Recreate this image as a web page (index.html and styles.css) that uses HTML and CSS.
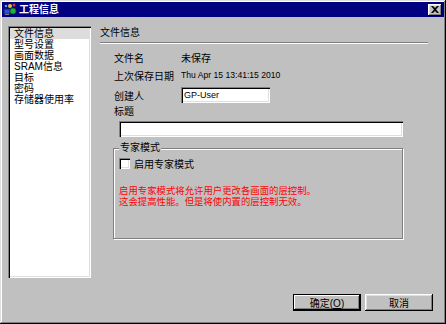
FILE: index.html
```html
<!DOCTYPE html>
<html lang="zh-CN">
<head>
    <meta charset="UTF-8">
    <title>工程信息</title>
    <link rel="stylesheet" href="styles.css">
</head>
<body>
    <div class="window">
        <!-- 标题栏 -->
        <div class="titlebar">
            <svg class="app-icon" width="14" height="13" viewBox="0 0 14 13">
                <rect x="1" y="6" width="6" height="5" fill="#3050c8" stroke="#102080" stroke-width="1"/>
                <rect x="2" y="11" width="4" height="1" fill="#808080"/>
                <circle cx="10" cy="8" r="3" fill="#20b040" stroke="#086020" stroke-width="0.8"/>
                <circle cx="7" cy="3" r="2" fill="#f0c020"/>
                <circle cx="11" cy="2" r="1.5" fill="#e03030"/>
                <circle cx="3" cy="3" r="1.3" fill="#40a0ff"/>
            </svg>
            <span class="title">工程信息</span>
            <button class="close-btn">
                <svg width="8" height="7" viewBox="0 0 8 7">
                    <path d="M0 0 L2 0 L4 2 L6 0 L8 0 L5 3.5 L8 7 L6 7 L4 5 L2 7 L0 7 L3 3.5 Z" fill="#000"/>
                </svg>
            </button>
        </div>

        <div class="main">
            <!-- 左侧列表 -->
            <ul class="nav-list">
                <li class="active">文件信息</li>
                <li>型号设置</li>
                <li>画面数据</li>
                <li>SRAM信息</li>
                <li>目标</li>
                <li>密码</li>
                <li>存储器使用率</li>
            </ul>

            <!-- 右侧内容 -->
            <div class="panel">
                <div class="panel-title">文件信息</div>
                <div class="separator"></div>

                <div class="field first">
                    <span class="label">文件名</span>
                    <span class="value">未保存</span>
                </div>
                <div class="field">
                    <span class="label">上次保存日期</span>
                    <span class="value date">Thu Apr 15 13:41:15 2010</span>
                </div>
                <div class="field author">
                    <span class="label">创建人</span>
                    <div class="text-input short">GP-User</div>
                </div>
                <div class="field-title">标题</div>
                <div class="text-input wide"></div>

                <fieldset class="group">
                    <legend>专家模式</legend>
                    <div class="check-row">
                        <span class="checkbox"></span>
                        <span>启用专家模式</span>
                    </div>
                    <p class="warning">启用专家模式将允许用户更改各画面的层控制。<br>这会提高性能。但是将使内置的层控制无效。</p>
                </fieldset>
            </div>
        </div>

        <!-- 按钮 -->
        <div class="footer">
            <button class="button default">确定(<u>O</u>)</button>
            <button class="button">取消</button>
        </div>
    </div>
</body>
</html>
```

FILE: styles.css
```css
body {
    margin: 0;
    padding: 0;
    font-family: "Liberation Sans", "Noto Sans CJK SC", sans-serif;
    font-size: 10px;
    color: #000;
    background-color: #c0c0c0;
}

.window {
    width: 446px;
    height: 324px;
    box-sizing: border-box;
    padding: 2px;
    background-color: #c0c0c0;
    display: flex;
    flex-direction: column;
    box-shadow: inset -1px -1px #000, inset 1px 1px #dfdfdf,
                inset -2px -2px #808080, inset 2px 2px #fff;
}

.titlebar {
    height: 15px;
    background-color: #000080;
    display: flex;
    align-items: center;
    padding: 0 2px 0 1px;
}

.app-icon {
    display: block;
}

.title {
    margin-left: 2px;
    color: #fff;
    font-weight: bold;
    font-size: 10px;
    line-height: 12px;
}

.close-btn {
    margin-left: auto;
    width: 14px;
    height: 12px;
    padding: 0;
    border: none;
    background-color: #c0c0c0;
    display: flex;
    align-items: center;
    justify-content: center;
    box-shadow: inset -1px -1px #000, inset 1px 1px #fff,
                inset -2px -2px #808080, inset 2px 2px #dfdfdf;
}

.close-btn svg {
    display: block;
}

.main {
    display: flex;
    padding: 9px 0 0 6px;
}

.nav-list {
    width: 83px;
    height: 252px;
    box-sizing: border-box;
    margin: 0;
    padding: 2px;
    list-style: none;
    background-color: #fff;
    box-shadow: inset 1px 1px #808080, inset 2px 2px #000,
                inset -1px -1px #fff, inset -2px -2px #dfdfdf;
}

.nav-list li {
    height: 11px;
    line-height: 11px;
    padding-left: 4px;
    white-space: nowrap;
}

.nav-list li.active {
    background-color: #dcdcdc;
}

.panel {
    margin-left: 9px;
    display: flex;
    flex-direction: column;
    align-items: flex-start;
}

.panel-title {
    margin-top: 1px;
    line-height: 12px;
}

.separator {
    width: 328px;
    margin-top: 3px;
    border-top: 1px solid #808080;
    border-bottom: 1px solid #fff;
}

.field {
    display: flex;
    align-items: center;
    height: 18px;
    margin-left: 14px;
}

.field.first {
    margin-top: 4px;
}

.field.author {
    margin-top: 2px;
}

.label {
    width: 67px;
    white-space: nowrap;
}

.value.date {
    font-size: 8.6px;
}

.text-input {
    height: 16px;
    box-sizing: border-box;
    background-color: #fff;
    padding: 2px 3px;
    font-size: 9px;
    line-height: 12px;
    box-shadow: inset 1px 1px #808080, inset 2px 2px #000,
                inset -1px -1px #fff, inset -2px -2px #dfdfdf;
}

.text-input.short {
    width: 89px;
}

.text-input.wide {
    width: 284px;
    margin: 3px 0 0 19px;
}

.field-title {
    margin: 2px 0 0 14px;
    line-height: 12px;
}

.group {
    width: 290px;
    height: 97px;
    box-sizing: border-box;
    margin: 5px 0 0 13px;
    padding: 0 0 0 5px;
    border: 1px solid #808080;
    box-shadow: 1px 1px 0 #fff, inset 1px 1px 0 #fff;
}

.group legend {
    padding: 0 1px;
    line-height: 12px;
    background-color: #c0c0c0;
}

.check-row {
    display: flex;
    align-items: center;
    height: 13px;
    margin-top: 3px;
}

.checkbox {
    width: 11px;
    height: 11px;
    margin-right: 4px;
    background-color: #fff;
    box-sizing: border-box;
    box-shadow: inset 1px 1px #808080, inset 2px 2px #000,
                inset -1px -1px #fff, inset -2px -2px #dfdfdf;
}

.warning {
    margin: 15px 0 0 0;
    font-size: 9.4px;
    line-height: 11px;
    color: #ff0000;
    white-space: nowrap;
}

.footer {
    margin-top: auto;
    display: flex;
    justify-content: flex-end;
    gap: 4px;
    padding: 0 11px 11px 0;
}

.button {
    width: 68px;
    height: 17px;
    padding: 0;
    border: none;
    background-color: #c0c0c0;
    font-family: "Liberation Sans", "Noto Sans CJK SC", sans-serif;
    font-size: 10px;
    color: #000;
    box-shadow: inset -1px -1px #000, inset 1px 1px #fff,
                inset -2px -2px #808080, inset 2px 2px #dfdfdf;
}

.button.default {
    border: 1px solid #000;
    box-shadow: inset -1px -1px #000, inset 1px 1px #fff,
                inset -2px -2px #808080;
}
```
